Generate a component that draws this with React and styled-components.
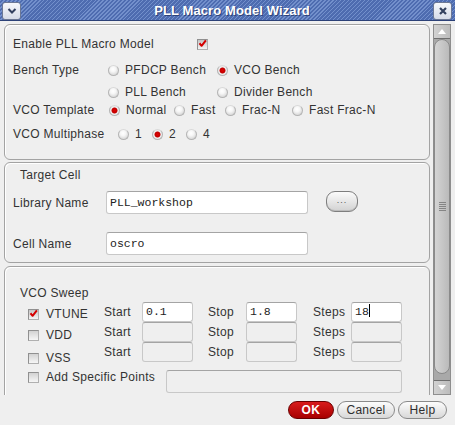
import React from "react";
import styled, { createGlobalStyle } from "styled-components";

const GlobalStyle = createGlobalStyle`
  html, body {
    margin: 0;
    padding: 0;
    background: #efefef;
  }
  body {
    font-family: "Liberation Sans", Arial, sans-serif;
    font-size: 12px;
    color: #333333;
  }
`;

const CheckMark = () => (
  <svg width="11" height="11" viewBox="0 0 11 11">
    <path d="M1.8 5.2 L4.4 8.3 L9.6 1.6" fill="none" stroke="#d40000" strokeWidth="2.4" strokeLinejoin="round" />
  </svg>
);

const Checkbox = ({ checked }) => (
  <CheckBoxBox checked={checked}>{checked && <CheckMark />}</CheckBoxBox>
);

const Radio = ({ label, checked, w }) => (
  <RadioOption $w={w}>
    <RadioDot $on={checked} />
    {label}
  </RadioOption>
);

const App = () => {
  return (
    <Window>
      <GlobalStyle />
      <TitleBar>
        <TitleButton>
          <svg width="10" height="8" viewBox="0 0 10 8">
            <path d="M1.5 2 L5 5.5 L8.5 2" fill="none" stroke="#33415f" strokeWidth="2" />
          </svg>
        </TitleButton>
        <Title>PLL Macro Model Wizard</Title>
        <TitleButton>
          <svg width="10" height="10" viewBox="0 0 10 10">
            <path d="M2 2 L8 8 M8 2 L2 8" fill="none" stroke="#33415f" strokeWidth="2.2" />
          </svg>
        </TitleButton>
      </TitleBar>

      <Main>
        <Content>
          <Panel $h={136} $mt={0}>
            <Row $mt={10}>
              <Label $w={184}>Enable PLL Macro Model</Label>
              <Checkbox checked />
            </Row>
            <Row $mt={8}>
              <Label $w={95}>Bench Type</Label>
              <Radio w={109} label="PFDCP Bench" />
              <Radio checked label="VCO Bench" />
            </Row>
            <Row $mt={4}>
              <Label $w={95} />
              <Radio w={109} label="PLL Bench" />
              <Radio label="Divider Bench" />
            </Row>
            <Row $mt={0}>
              <Label $w={96}>VCO Template</Label>
              <Radio w={65} checked label="Normal" />
              <Radio w={51} label="Fast" />
              <Radio w={67} label="Frac-N" />
              <Radio label="Fast Frac-N" />
            </Row>
            <Row $mt={6}>
              <Label $w={105}>VCO Multiphase</Label>
              <Radio w={34} label="1" />
              <Radio w={34} checked label="2" />
              <Radio label="4" />
            </Row>
          </Panel>

          <Panel $h={101} $mt={2}>
            <Row $mt={3}>
              <GroupTitle>Target Cell</GroupTitle>
            </Row>
            <FieldRow $mt={7}>
              <Label $w={93}>Library Name</Label>
              <Field $w={202} $h={23}>PLL_workshop</Field>
              <BrowseButton>...</BrowseButton>
            </FieldRow>
            <FieldRow $mt={18}>
              <Label $w={93}>Cell Name</Label>
              <Field $w={202} $h={23}>oscro</Field>
            </FieldRow>
          </Panel>

          <Panel $h={160} $mt={3}>
            <Row $mt={17}>
              <GroupTitle>VCO Sweep</GroupTitle>
            </Row>
            <SweepBody>
              <CheckColumn>
                <CheckItem $mt={3}>
                  <Checkbox checked />
                  VTUNE
                </CheckItem>
                <CheckItem $mt={3}>
                  <Checkbox />
                  VDD
                </CheckItem>
                <CheckItem $mt={5}>
                  <Checkbox />
                  VSS
                </CheckItem>
              </CheckColumn>
              <SweepGrid>
                <GridLabel>Start</GridLabel>
                <Field $h={20}>0.1</Field>
                <span />
                <GridLabel>Stop</GridLabel>
                <Field $h={20}>1.8</Field>
                <span />
                <GridLabel>Steps</GridLabel>
                <Field $h={20}>
                  18<Caret />
                </Field>

                <GridLabel>Start</GridLabel>
                <Field $h={20} $off />
                <span />
                <GridLabel>Stop</GridLabel>
                <Field $h={20} $off />
                <span />
                <GridLabel>Steps</GridLabel>
                <Field $h={20} $off />

                <GridLabel>Start</GridLabel>
                <Field $h={20} $off />
                <span />
                <GridLabel>Stop</GridLabel>
                <Field $h={20} $off />
                <span />
                <GridLabel>Steps</GridLabel>
                <Field $h={20} $off />
              </SweepGrid>
            </SweepBody>
            <PointsRow>
              <CheckItem $mt={0} $w={138}>
                <Checkbox />
                Add Specific Points
              </CheckItem>
              <PointsField $w={236} $h={23} $off />
            </PointsRow>
          </Panel>
        </Content>

        <Scrollbar>
          <ScrollArrow>
            <svg width="10" height="7" viewBox="0 0 10 7">
              <path d="M1 6 L5 1 L9 6 Z" fill="#fff" />
            </svg>
          </ScrollArrow>
          <Thumb>
            <Grip />
          </Thumb>
          <ScrollArrow $down>
            <svg width="10" height="7" viewBox="0 0 10 7">
              <path d="M1 1 L5 6 L9 1 Z" fill="#fff" />
            </svg>
          </ScrollArrow>
        </Scrollbar>
      </Main>

      <Footer>
        <PillButton $primary $w={46}>OK</PillButton>
        <PillButton $w={58}>Cancel</PillButton>
        <PillButton $w={49}>Help</PillButton>
      </Footer>
    </Window>
  );
};

const Window = styled.div`
  width: 455px;
  height: 425px;
  display: flex;
  flex-direction: column;
  overflow: hidden;
  background: #efefef;
`;

const TitleBar = styled.div`
  height: 20px;
  flex-shrink: 0;
  display: flex;
  align-items: center;
  padding: 0 3px 0 2px;
  border-bottom: 1px solid #2c4177;
  background: repeating-linear-gradient(135deg, #7390cc 0 1px, #4e6cb0 1px 2.8px);
`;

const TitleButton = styled.div`
  width: 17px;
  height: 16px;
  margin-top: 1px;
  display: flex;
  align-items: center;
  justify-content: center;
  border: 1px solid #6c7894;
  border-radius: 3px;
  background: linear-gradient(#f6f8fc, #d6dce8);
`;

const Title = styled.div`
  flex: 1;
  padding-left: 10px;
  text-align: center;
  color: #fff;
  font-size: 13px;
  font-weight: bold;
  letter-spacing: 0.1px;
  text-shadow: 1px 1px 0 #2e4277;
`;

const Main = styled.div`
  height: 374px;
  flex-shrink: 0;
  display: flex;
  padding-top: 3px;
  box-sizing: border-box;
`;

const Content = styled.div`
  width: 430px;
  padding-left: 4px;
  box-sizing: border-box;
  display: flex;
  flex-direction: column;
  overflow: hidden;
`;

const Panel = styled.div`
  height: ${(p) => p.$h}px;
  margin-top: ${(p) => p.$mt}px;
  flex-shrink: 0;
  box-sizing: border-box;
  border: 1px solid #a3a3a3;
  border-radius: 6px;
  box-shadow: inset 1px 1px 0 #ffffff;
  padding: 0 0 0 8px;
  display: flex;
  flex-direction: column;
`;

const Row = styled.div`
  height: 18px;
  margin-top: ${(p) => p.$mt}px;
  display: flex;
  align-items: center;
  white-space: nowrap;
  letter-spacing: 0.3px;
`;

const FieldRow = styled(Row)`
  height: 23px;
`;

const Label = styled.div`
  width: ${(p) => p.$w}px;
  flex-shrink: 0;
`;

const GroupTitle = styled.div`
  margin-left: 7px;
`;

const CheckBoxBox = styled.div`
  width: 11px;
  height: 11px;
  box-sizing: border-box;
  flex-shrink: 0;
  display: flex;
  align-items: center;
  justify-content: center;
  border: 1px solid #b0b0b0;
  border-top-color: #909090;
  border-left-color: #909090;
  background: ${(p) =>
    p.checked
      ? "linear-gradient(#c4c4c4, #f4f4f4)"
      : "linear-gradient(#d2d2d2, #f6f6f6)"};
  svg {
    margin-top: -1px;
  }
`;

const RadioOption = styled.div`
  width: ${(p) => (p.$w ? `${p.$w}px` : "auto")};
  flex-shrink: 0;
  display: flex;
  align-items: center;
`;

const RadioDot = styled.div`
  width: 11px;
  height: 11px;
  margin-right: 6px;
  border-radius: 50%;
  box-sizing: border-box;
  flex-shrink: 0;
  border: 1px solid #b4b4b4;
  border-top-color: #d8d8d8;
  background: ${(p) =>
    p.$on
      ? "radial-gradient(circle at 50% 50%, #e00000 0, #c00000 2.6px, #f2f2f2 3.4px, #d0d0d0 100%)"
      : "radial-gradient(circle at 45% 35%, #ffffff 0, #f6f6f6 35%, #c8c8c8 100%)"};
`;

const Field = styled.div`
  width: ${(p) => (p.$w ? `${p.$w}px` : "auto")};
  height: ${(p) => p.$h}px;
  box-sizing: border-box;
  flex-shrink: 0;
  padding-left: 3px;
  line-height: ${(p) => p.$h - 2}px;
  font-family: "Liberation Mono", "Courier New", monospace;
  font-size: 11.5px;
  letter-spacing: 0;
  color: #222222;
  border: 1px solid #c8c8c8;
  border-top-color: #a4a4a4;
  border-radius: 3px;
  background: ${(p) => (p.$off ? "#efefef" : "#ffffff")};
  white-space: pre;
`;

const Caret = styled.span`
  display: inline-block;
  width: 1px;
  height: 13px;
  vertical-align: -2px;
  background: #000;
`;

const BrowseButton = styled.div`
  width: 32px;
  height: 21px;
  margin: -2px 0 0 18px;
  box-sizing: border-box;
  display: flex;
  align-items: center;
  justify-content: center;
  border: 1px solid #7e7e7e;
  border-radius: 9px;
  background: linear-gradient(#fbfbfb, #d2d2d2);
  box-shadow: inset 0 -1px 0 #bcbcbc;
  font-size: 9px;
  color: #555;
  letter-spacing: 1px;
  padding-bottom: 3px;
`;

const SweepBody = styled.div`
  display: flex;
  align-items: flex-start;
`;

const CheckColumn = styled.div`
  width: 76px;
  margin-left: 15px;
  display: flex;
  flex-direction: column;
`;

const CheckItem = styled.div`
  width: ${(p) => (p.$w ? `${p.$w}px` : "auto")};
  height: 18px;
  margin-top: ${(p) => p.$mt}px;
  flex-shrink: 0;
  display: flex;
  align-items: center;
  gap: 7px;
  letter-spacing: 0.3px;
  white-space: nowrap;
`;

const SweepGrid = styled.div`
  display: grid;
  grid-template-columns: 38px 51px 15px 38px 51px 16px 38px 51px;
  grid-auto-rows: 20px;
`;

const GridLabel = styled.div`
  line-height: 20px;
  letter-spacing: 0.3px;
`;

const PointsRow = styled.div`
  margin: 1px 0 0 15px;
  display: flex;
  align-items: flex-start;
`;

const PointsField = styled(Field)`
  margin-top: 2px;
`;

const Scrollbar = styled.div`
  width: 18px;
  height: 371px;
  margin-left: 3px;
  box-sizing: border-box;
  display: flex;
  flex-direction: column;
  border: 1px solid #8e8e8e;
  background: #a9a9a9;
`;

const ScrollArrow = styled.div`
  height: 13px;
  flex-shrink: 0;
  display: flex;
  align-items: center;
  justify-content: center;
  background: linear-gradient(90deg, #d2d2d2, #bcbcbc);
  border-bottom: ${(p) => (p.$down ? "none" : "1px solid #6e6e6e")};
  border-top: ${(p) => (p.$down ? "1px solid #6e6e6e" : "none")};
`;

const Thumb = styled.div`
  flex: 1;
  margin: 0 0 6px 0;
  box-sizing: border-box;
  display: flex;
  align-items: center;
  justify-content: center;
  border: 1px solid #8a8a8a;
  border-radius: 8px;
  background: linear-gradient(90deg, #d4d4d4, #bababa);
`;

const Grip = styled.div`
  width: 7px;
  height: 9px;
  background: repeating-linear-gradient(#858585 0 1px, transparent 1px 2px);
`;

const Footer = styled.div`
  flex: 1;
  display: flex;
  justify-content: flex-end;
  align-items: center;
  gap: 3px;
  padding-right: 8px;
`;

const PillButton = styled.div`
  width: ${(p) => p.$w}px;
  height: 18px;
  box-sizing: border-box;
  display: flex;
  align-items: center;
  justify-content: center;
  border-radius: 9px;
  border: 1px solid ${(p) => (p.$primary ? "#6a0000" : "#8a8a8a")};
  background: ${(p) =>
    p.$primary
      ? "linear-gradient(#d81c1c, #a80000)"
      : "linear-gradient(#fcfcfc, #d8d8d8)"};
  color: ${(p) => (p.$primary ? "#ffffff" : "#2e2e2e")};
  font-weight: ${(p) => (p.$primary ? "bold" : "normal")};
  letter-spacing: ${(p) => (p.$primary ? "0.6px" : "0.3px")};
`;

export default App;
